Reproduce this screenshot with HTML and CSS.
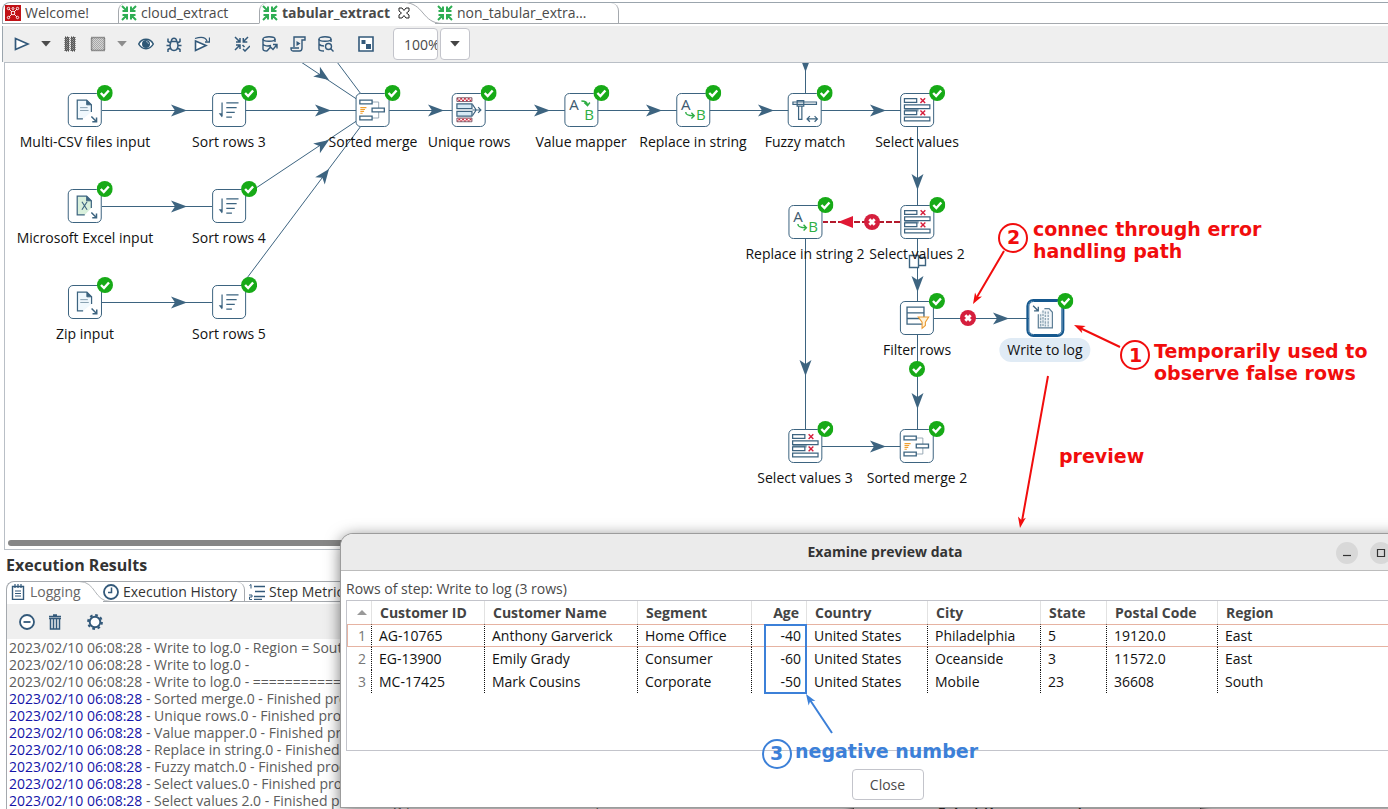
FILE: index.html
```html
<!DOCTYPE html>
<html lang="en">
<head>
<meta charset="utf-8">
<title>tabular_extract</title>
<link rel="stylesheet" href="styles.css">
</head>
<body>
<svg class="sprite" aria-hidden="true">
  <defs>
    <pattern id="hatch" width="4" height="4" patternUnits="userSpaceOnUse"><rect width="4" height="4" fill="#fff"/><rect width="2" height="2" fill="#d22c40"/><rect x="2" y="2" width="2" height="2" fill="#d22c40"/></pattern>
    <pattern id="dither" width="2" height="2" patternUnits="userSpaceOnUse"><rect width="1" height="1" fill="#555"/><rect x="1" y="1" width="1" height="1" fill="#555"/></pattern>
  </defs>
  <symbol id="transform" viewBox="0 0 16 16"><g fill="none" stroke="#2fae54" stroke-width="2"><path d="M1 1l5 5M6 1.500V6H1.500M15 1l-5 5M10 1.500V6h4.500M1 15l5-5M6 14.500V10H1.500M15 15l-5-5M10 14.500V10h4.500"/></g></symbol>
  <symbol id="check" viewBox="0 0 16 16"><circle cx="8" cy="8" r="8" fill="#17aa17"/><path d="M4 8l3 3 5-5.500" fill="none" stroke="#fff" stroke-width="2.400"/></symbol>
  <symbol id="cross" viewBox="0 0 16 16"><circle cx="8" cy="8" r="8" fill="#d51f3d"/><path d="M5.300 5.300l5.400 5.400M10.700 5.300l-5.400 5.400" fill="none" stroke="#fff" stroke-width="2.800"/></symbol>
  <symbol id="i-doc" viewBox="0 0 34 34"><path d="M15 26.500H9v-20h10l5 5V19" fill="#f0f8fd" stroke="#3d6480" stroke-width="1.300"/><path d="M19 6.500v5h5" fill="#3d6480" stroke="#3d6480"/><path d="M12 14.500h8M12 17.500h9" stroke="#7f99ab" stroke-width="1"/><path d="M24 24l5 5M29.500 25v4.500H25" fill="none" stroke="#3d6480" stroke-width="1.600"/></symbol>
  <symbol id="i-xls" viewBox="0 0 34 34"><path d="M17 26.500H9v-20h10l5 5V19" fill="#d9f0dc" stroke="#3d6480" stroke-width="1.300"/><path d="M19 6.500v5h5" fill="#3d6480" stroke="#3d6480"/><path d="M14 12.500l5.500 8.500M19.500 12.500L14 21" stroke="#3d6480" stroke-width="1.200"/><path d="M24 24l5 5M29.500 25v4.500H25" fill="none" stroke="#3d6480" stroke-width="1.600"/></symbol>
  <symbol id="i-sort" viewBox="0 0 34 34"><path d="M9.500 9v15M14 9.500h13M14 14.500h11M14 19.500h9M14 24.500h6" fill="none" stroke="#3d6480" stroke-width="1.300"/><path d="M6 20.500h3.500V25z" fill="#3d6480"/></symbol>
  <symbol id="i-merge" viewBox="0 0 34 34"><path d="M16 8.500h7.500v17H16" fill="none" stroke="#93a4b1"/><g fill="#fff" stroke="#3d6480" stroke-width="1.400"><path d="M3.500 6.500h13v4h-13zM3.500 23.500h13v4h-13zM16.500 15h13v4h-13z"/></g><path d="M4 14.500h6.500M4 16.500h5M4 18.500h4M4 20.500h2.500" stroke="#f0a030" stroke-width="1.200"/></symbol>
  <symbol id="i-unique" viewBox="0 0 34 34"><path d="M4.500 4h16v4h-16zM4.500 25.500h16v4h-16z" fill="url(#hatch)" stroke="#7d6170"/><path d="M4.500 10.500h16v5h-16zM4.500 18.500h16v5h-16z" fill="#d6e9f4" stroke="#3d6480" stroke-width="1.300"/><path d="M21 11l4 6-4 6M21 17h9M27 14l3 3-3 3" fill="none" stroke="#3d6480" stroke-width="1.200"/></symbol>
  <symbol id="i-map" viewBox="0 0 34 34"><text x="4" y="17" class="glyph glyph-a">A</text><text x="20" y="28" class="glyph glyph-b">B</text><path d="M17 7.500c4 0 6 1 6.500 4M20 9l3.500 3.500L26 9" fill="none" stroke="#2fae44" stroke-width="1.500"/></symbol>
  <symbol id="i-replace" viewBox="0 0 34 34"><text x="4" y="17" class="glyph glyph-a">A</text><text x="20" y="28" class="glyph glyph-b">B</text><path d="M9 19c0 3 2 4 8.500 4M15 20l3 3-3 3" fill="none" stroke="#2fae44" stroke-width="1.500"/></symbol>
  <symbol id="i-fuzzy" viewBox="0 0 34 34"><g fill="#fff" stroke="#3d6480" stroke-width="1.300"><path d="M4.500 8.500h25V11h-25zM10.500 13h3.500v14h-3.500zM9 7h7v6H9z"/></g><path d="M20 26.500h10M22.500 23.500l-3 3 3 3M27.500 23.500l3 3-3 3" fill="none" stroke="#3d6480" stroke-width="1.300"/></symbol>
  <symbol id="i-select" viewBox="0 0 34 34"><path d="M3.500 15.500h15v3h-15z" fill="#8fa5b5"/><g fill="#fff" stroke="#3d6480" stroke-width="1.300"><path d="M3.500 5h13v4h-13zM3.500 11.500h27v4h-27zM3.500 18h13v4h-13zM3.500 24.500h27v4h-27z"/></g><path d="M20.500 4.500l5 5M25.500 4.500l-5 5M20.500 17.500l5 5M25.500 17.500l-5 5" stroke="#d51f3d" stroke-width="1.500"/></symbol>
  <symbol id="i-filter" viewBox="0 0 34 34"><path d="M6.500 5.500h18v18h-18zM6.500 11.500h18M6.500 17.500h18" fill="#fff" stroke="#3d6480" stroke-width="1.400"/><path d="M18.500 16h11L26 21.500V25l-3.500 3v-6.500z" fill="#fff3d9" stroke="#eb9c35" stroke-width="1.200"/></symbol>
  <symbol id="i-log" viewBox="0 0 34 34"><path d="M4 4l5 5M9.500 5v4.500H5" fill="none" stroke="#3d6480" stroke-width="1.400"/><path d="M9.500 13v14.500h15V11l-3.500-4h-5" fill="#f2f6f9" stroke="#5e7f96" stroke-width="1.300"/><path d="M12 13v13M14.500 9v17M17 10v16M20 10v16" stroke="#8fa7b7" stroke-width="1.500" stroke-dasharray="2.500 1"/></symbol>
</svg>

<main class="app">
  <nav class="tabs" aria-label="Open files">
    <button class="tab tab-welcome"><svg class="i16" viewBox="0 0 16 16"><path fill="#c11116" d="M0 0h16v16H0z"/><g fill="none" stroke="#fff" stroke-width=".9"><path d="M4 4l3 3M12 4L9 7M4 12l3-3M12 12L9 9"/><circle cx="8" cy="8" r="1.800"/><circle cx="3.500" cy="3.500" r="1.200"/><circle cx="12.500" cy="3.500" r="1.200"/><circle cx="3.500" cy="12.500" r="1.200"/><circle cx="12.500" cy="12.500" r="1.200"/><circle cx="8" cy="3.500" r="1"/></g></svg>Welcome!</button>
    <button class="tab tab-cloud"><svg class="i16"><use href="#transform"/></svg>cloud_extract</button>
    <button class="tab tab-active"><svg class="i16"><use href="#transform"/></svg>tabular_extract<svg class="close-x" viewBox="0 0 12 12"><path d="M1 1h3l2 2.500L8 1h3v3L8.500 6 11 8v3H8L6 8.500 4 11H1V8l2.500-2L1 4z" fill="#fff" stroke="#222"/></svg></button>
    <svg class="swoop" viewBox="0 0 40 22"><path d="M0 0c22 0 18 21.500 40 21.500V22H0z" fill="#fff"/><path d="M0 .5c22 0 18 21 40 21" fill="none" stroke="#a5a9ae"/></svg>
    <button class="tab tab-last"><svg class="i16"><use href="#transform"/></svg>non_tabular_extra…</button>
    <span class="tab-rest"></span>
  </nav>

  <div class="toolbar">
    <button class="tool" aria-label="Run"><svg class="i16" viewBox="0 0 16 16"><path d="M1.500 2.500v11L14 8z" fill="#fff" stroke="#33597a" stroke-width="1.700"/></svg></button>
    <button class="tool caret" aria-label="Run options"><svg class="i8" viewBox="0 0 8 5"><path d="M0 0h8L4 4.500z" fill="#4c4c4c"/></svg></button>
    <button class="tool" aria-label="Pause"><svg class="i16" viewBox="0 0 16 16"><path d="M3 1h4v14H3zM9 1h4v14H9z" fill="#8d8d8d"/><path d="M3 1h4v14H3zM9 1h4v14H9z" fill="url(#dither)" stroke="#444" stroke-dasharray="1 1"/></svg></button>
    <button class="tool" aria-label="Stop"><svg class="i16" viewBox="0 0 16 16"><path d="M1.500 1.500h13v13h-13z" fill="#d4d4d4"/><path d="M1.500 1.500h13v13h-13z" fill="url(#dither)" fill-opacity=".35" stroke="#444" stroke-width="1.500" stroke-dasharray="1 1"/></svg></button>
    <button class="tool caret" aria-label="Stop options"><svg class="i8" viewBox="0 0 8 5"><path d="M0 0h8L4 4.500z" fill="#8d8d8d"/></svg></button>
    <button class="tool" aria-label="Preview"><svg class="i16" viewBox="0 0 16 16"><path d="M.7 8C4 1.800 12 1.800 15.300 8 12 14.200 4 14.200.7 8z" fill="#fff" stroke="#2f5876" stroke-width="1.500"/><circle cx="8" cy="8" r="4" fill="#2f5876"/><path d="M8 5.500A2.500 2.500 0 0 1 10.500 8" stroke="#9bb0c0" fill="none"/></svg></button>
    <button class="tool" aria-label="Debug"><svg class="i16" viewBox="0 0 16 16"><g fill="none" stroke="#33597a" stroke-width="1.500"><path d="M5 5.500h6l1 3.500c0 3-1.500 5.500-4 5.500S4 12 4 9zM5.500 5.500C5 1 11 1 10.500 5.500M4.500 7L2 5.500V2.500M11.500 7L14 5.500V2.500M4 9.500H.5M12 9.500h3.500M4.500 12L2 13.500V16M11.500 12l2.500 1.500V16"/></g></svg></button>
    <button class="tool" aria-label="Replay"><svg class="i16" viewBox="0 0 16 16"><path d="M1.500 5v9.500L12 9.500z" fill="#fff" stroke="#33597a" stroke-width="1.600"/><path d="M1 2.500c6-2 10.500-1.500 12 2.500M15.500 1.500v4.500H11" fill="none" stroke="#33597a" stroke-width="1.300"/></svg></button>
    <span class="gap"></span>
    <button class="tool" aria-label="Verify"><svg class="i16" viewBox="0 0 16 16"><g fill="none" stroke="#33597a" stroke-width="1.500"><path d="M1 1l5 5M6 2v4H2M14 1L9.500 5.500M9.300 2v4h4M1 14l5-5M6 13V9H2"/><path d="M8.500 9l2 2M9 13l2 2 5-5" /></g></svg></button>
    <button class="tool" aria-label="Analyze impact"><svg class="i16" viewBox="0 0 16 16"><g fill="none" stroke="#33597a" stroke-width="1.400"><ellipse cx="7" cy="3" rx="6" ry="2.200"/><path d="M1 3v10c0 1.200 2 2 4 2M13 3v3M1 8c1 2 5 2.500 8 1.500M5 15l3.500-4 2.500 2.500 4-5M11 8.500h4v4"/></g></svg></button>
    <button class="tool" aria-label="Get SQL"><svg class="i16" viewBox="0 0 16 16"><g fill="none" stroke="#33597a" stroke-width="1.400"><path d="M4 11V1h11v3h-3v8c0 2-1 3-2.500 3H3c-1.500 0-2-1-2-3h8"/></g><path d="M6.500 5v5l4-2.500z" fill="#33597a"/></svg></button>
    <button class="tool" aria-label="Explore database"><svg class="i16" viewBox="0 0 16 16"><g fill="none" stroke="#33597a" stroke-width="1.400"><ellipse cx="7" cy="3" rx="6" ry="2.200"/><path d="M1 3v10c0 1.200 2 2 5 2M13 3v3M1 8c1 1.500 3 2 5 2"/><circle cx="10.500" cy="10.500" r="3"/><path d="M12.500 12.500l3 3"/></g></svg></button>
    <span class="gap"></span>
    <button class="tool" aria-label="Show results"><svg class="i16" viewBox="0 0 16 16"><path d="M1 1h14v14H1z" fill="#fff" stroke="#33597a" stroke-width="1.600"/><path d="M3.500 4h4v4h-4zM8 8h5v5H8z" fill="#33597a"/></svg></button>
    <input class="zoom" type="text" value="100%" aria-label="Zoom">
    <button class="zoom-drop" aria-label="Zoom levels"><svg class="i8" viewBox="0 0 8 5"><path d="M0 0h8L4 4.500z" fill="#444"/></svg></button>
  </div>

  <section class="canvas" aria-label="Transformation">
    <svg class="hops" aria-hidden="true">
      <g class="hop">
        <path d="M97 47.500h830M97 143.500h110M97 239.500h110M224 143L368 47M224 239L368 47M224-49L368 47M224-145L368 47"/>
        <path d="M800.500-5v50M912.500 64v320M800.500 175v210M817 383.500h80M929 255.500h96"/>
      </g>
      <g class="heads">
        <path id="h" d="M166 41.500L182 47.500 166 53.500 170 47.500z"/>
        <use href="#h" x="144"/><use href="#h" x="257"/><use href="#h" x="363"/><use href="#h" x="475"/><use href="#h" x="587"/><use href="#h" x="699"/>
        <use href="#h" y="96"/><use href="#h" y="192"/><use href="#h" x="699" y="336"/><use href="#h" x="822" y="208"/>
        <path id="v" d="M906.500 111L912.500 127 918.500 111 912.500 115z"/>
        <use href="#v" y="102"/><use href="#v" y="219"/><use href="#v" x="-112" y="186"/><use href="#v" x="-112" y="-118"/>
        <path d="M-15-6L0 0-15 6-11 0z" transform="translate(324 77) rotate(-34)"/>
        <path d="M-15-6L0 0-15 6-11 0z" transform="translate(324 106) rotate(-53)"/>
        <path d="M-15-6L0 0-15 6-11 0z" transform="translate(324 17) rotate(34)"/>
      </g>
      <path d="M895 159H818" stroke="#b31a2c" stroke-width="2" stroke-dasharray="6 2"/>
      <path d="M833 159l15-6v12z" fill="#e01834"/>
      <path d="M904.500 192.500h9v12h-9zM913.500 194.500h7v8h-7z" fill="#fff" stroke="#3d6480" stroke-width="1.400"/>
      <use href="#cross" x="859" y="151" width="16" height="16"/>
      <use href="#cross" x="955" y="247" width="16" height="16"/>
      <use href="#check" x="904" y="298" width="16" height="16"/>
    </svg>
    <div class="node" style="left:80px;top:47px"><svg class="box"><use href="#i-doc"/></svg><svg class="ok"><use href="#check"/></svg><span class="name">Multi-CSV files input</span></div>
    <div class="node" style="left:224px;top:47px"><svg class="box"><use href="#i-sort"/></svg><svg class="ok"><use href="#check"/></svg><span class="name">Sort rows 3</span></div>
    <div class="node" style="left:368px;top:47px"><svg class="box"><use href="#i-merge"/></svg><svg class="ok"><use href="#check"/></svg><span class="name">Sorted merge</span></div>
    <div class="node" style="left:464px;top:47px"><svg class="box"><use href="#i-unique"/></svg><svg class="ok"><use href="#check"/></svg><span class="name">Unique rows</span></div>
    <div class="node" style="left:576px;top:47px"><svg class="box"><use href="#i-map"/></svg><svg class="ok"><use href="#check"/></svg><span class="name">Value mapper</span></div>
    <div class="node" style="left:688px;top:47px"><svg class="box"><use href="#i-replace"/></svg><svg class="ok"><use href="#check"/></svg><span class="name">Replace in string</span></div>
    <div class="node" style="left:800px;top:47px"><svg class="box"><use href="#i-fuzzy"/></svg><svg class="ok"><use href="#check"/></svg><span class="name">Fuzzy match</span></div>
    <div class="node" style="left:912px;top:47px"><svg class="box"><use href="#i-select"/></svg><svg class="ok"><use href="#check"/></svg><span class="name">Select values</span></div>
    <div class="node" style="left:80px;top:143px"><svg class="box"><use href="#i-xls"/></svg><svg class="ok"><use href="#check"/></svg><span class="name">Microsoft Excel input</span></div>
    <div class="node" style="left:224px;top:143px"><svg class="box"><use href="#i-sort"/></svg><svg class="ok"><use href="#check"/></svg><span class="name">Sort rows 4</span></div>
    <div class="node" style="left:80px;top:239px"><svg class="box"><use href="#i-doc"/></svg><svg class="ok"><use href="#check"/></svg><span class="name">Zip input</span></div>
    <div class="node" style="left:224px;top:239px"><svg class="box"><use href="#i-sort"/></svg><svg class="ok"><use href="#check"/></svg><span class="name">Sort rows 5</span></div>
    <div class="node" style="left:800px;top:159px"><svg class="box"><use href="#i-replace"/></svg><svg class="ok"><use href="#check"/></svg><span class="name">Replace in string 2</span></div>
    <div class="node" style="left:912px;top:159px"><svg class="box"><use href="#i-select"/></svg><svg class="ok"><use href="#check"/></svg><span class="name">Select values 2</span></div>
    <div class="node" style="left:912px;top:255px"><svg class="box"><use href="#i-filter"/></svg><svg class="ok"><use href="#check"/></svg><span class="name">Filter rows</span></div>
    <div class="node selected" style="left:1040px;top:255px"><svg class="box"><use href="#i-log"/></svg><svg class="ok"><use href="#check"/></svg><span class="name">Write to log</span></div>
    <div class="node" style="left:800px;top:383px"><svg class="box"><use href="#i-select"/></svg><svg class="ok"><use href="#check"/></svg><span class="name">Select values 3</span></div>
    <div class="node" style="left:912px;top:383px"><svg class="box"><use href="#i-merge"/></svg><svg class="ok"><use href="#check"/></svg><span class="name">Sorted merge 2</span></div>
    <div class="scroll"></div>
  </section>

  <section class="results">
    <h2 class="heading">Execution Results</h2>
    <nav class="rtabs" aria-label="Results">
      <button class="rtab rtab-active"><svg class="i16" viewBox="0 0 16 16"><path d="M2.500 2.500h11v13h-11z" fill="#fff" stroke="#33597a" stroke-width="1.400"/><path d="M5 0v4M8 0v4M11 0v4M5 7h6M5 9.500h6M5 12h6" stroke="#33597a" stroke-width="1.200"/></svg>Logging</button>
      <svg class="swoop rswoop" viewBox="0 0 40 22" preserveAspectRatio="none"><path d="M0 .5c22 0 18 21 40 21" fill="none" stroke="#a5a9ae"/></svg>
      <button class="rtab rtab-history"><svg class="i16" viewBox="0 0 16 16"><circle cx="8" cy="8" r="7" fill="#fff" stroke="#33597a" stroke-width="1.800"/><path d="M8.500 3.500v5H5" fill="none" stroke="#33597a" stroke-width="1.500"/></svg>Execution History</button>
      <button class="rtab rtab-metrics"><svg class="i16" viewBox="0 0 16 16"><path d="M5 2.500h11M6 7.500h10M5 12.500h11M5 15.500h8" stroke="#33597a" stroke-width="1.300"/><path d="M.5 1.500L2 .5v4M0 11h3v2H.5v2.500H3" fill="none" stroke="#33597a"/></svg>Step Metrics</button>
    </nav>
    <div class="rbody">
      <div class="rtools">
        <button class="tool" aria-label="Collapse"><svg class="i16" viewBox="0 0 16 16"><circle cx="8" cy="8" r="7" fill="#fff" stroke="#33597a" stroke-width="1.800"/><path d="M4.500 8h7" stroke="#33597a" stroke-width="1.800"/></svg></button>
        <button class="tool" aria-label="Clear log"><svg class="i16" viewBox="0 0 16 16"><path d="M2 2.500h12M6 1h4M2 4.500h12M3.500 5v10h9V5M6.500 5v10M9.500 5v10" fill="none" stroke="#33597a" stroke-width="1.500"/></svg></button>
        <span class="gap"></span>
        <button class="tool" aria-label="Log settings"><svg class="i16" viewBox="0 0 16 16"><circle cx="8" cy="8" r="5.300" fill="#fff" stroke="#33597a" stroke-width="1.900"/><circle cx="8" cy="8" r="6.900" fill="none" stroke="#33597a" stroke-width="2" stroke-dasharray="2.700 2.720"/></svg></button>
      </div>
      <div class="log">
        <p>2023/02/10 06:08:28 - Write to log.0 - Region = South</p>
        <p>2023/02/10 06:08:28 - Write to log.0 - </p>
        <p>2023/02/10 06:08:28 - Write to log.0 - ====================</p>
        <p><time>2023/02/10 06:08:28</time> - Sorted merge.0 - Finished processing</p>
        <p><time>2023/02/10 06:08:28</time> - Unique rows.0 - Finished processing</p>
        <p><time>2023/02/10 06:08:28</time> - Value mapper.0 - Finished processing</p>
        <p><time>2023/02/10 06:08:28</time> - Replace in string.0 - Finished processing</p>
        <p><time>2023/02/10 06:08:28</time> - Fuzzy match.0 - Finished processing</p>
        <p><time>2023/02/10 06:08:28</time> - Select values.0 - Finished processing</p>
        <p><time>2023/02/10 06:08:28</time> - Select values 2.0 - Finished processing (I=0, O=0, R=9, W=9, U=0, E=0)</p>
      </div>
    </div>
  </section>

  <div class="back-window"><b>Select the preview step:</b></div>

  <section class="dialog" role="dialog" aria-labelledby="dlg-title">
    <header class="dlg-head">
      <h2 id="dlg-title">Examine preview data</h2>
      <div class="win-buttons">
        <button class="win" aria-label="Minimize"><svg class="i16" viewBox="0 0 16 16"><path d="M4 10.500h8" stroke="#333" stroke-width="1.200"/></svg></button>
        <button class="win" aria-label="Maximize"><svg class="i16" viewBox="0 0 16 16"><path d="M4.500 4.500h7v7h-7z" fill="none" stroke="#333" stroke-width="1.200"/></svg></button>
      </div>
    </header>
    <div class="dlg-body">
      <p class="caption">Rows of step: Write to log (3 rows)</p>
      <div class="grid">
        <table>
          <colgroup><col class="c-n"><col class="c-id"><col class="c-name"><col class="c-seg"><col class="c-age"><col class="c-country"><col class="c-city"><col class="c-state"><col class="c-zip"><col></colgroup>
          <thead><tr><th class="num"><svg class="sort" viewBox="0 0 10 5"><path d="M0 5l5-5 5 5z" fill="#999"/></svg></th><th>Customer ID</th><th>Customer Name</th><th>Segment</th><th class="num">Age</th><th>Country</th><th>City</th><th>State</th><th>Postal Code</th><th>Region</th></tr></thead>
          <tbody>
            <tr class="current"><td class="num idx">1</td><td>AG-10765</td><td>Anthony Garverick</td><td>Home Office</td><td class="num">-40</td><td>United States</td><td>Philadelphia</td><td>5</td><td>19120.0</td><td>East</td></tr>
            <tr><td class="num idx">2</td><td>EG-13900</td><td>Emily Grady</td><td>Consumer</td><td class="num">-60</td><td>United States</td><td>Oceanside</td><td>3</td><td>11572.0</td><td>East</td></tr>
            <tr><td class="num idx">3</td><td>MC-17425</td><td>Mark Cousins</td><td>Corporate</td><td class="num">-50</td><td>United States</td><td>Mobile</td><td>23</td><td>36608</td><td>South</td></tr>
          </tbody>
        </table>
      </div>
      <div class="actions"><button class="close">Close</button></div>
    </div>
  </section>

  <svg class="notes">
    <g class="red">
      <path d="M1004 251L977 297M1120 347L1080 328M1048 376L1022 521"/>
      <path class="tip" d="M0 0L-11-4-8 0-11 4z" transform="translate(973 304) rotate(120)"/>
      <path class="tip" d="M0 0L-11-4-8 0-11 4z" transform="translate(1074 325) rotate(205)"/>
      <path class="tip" d="M0 0L-11-4-8 0-11 4z" transform="translate(1020 528) rotate(100)"/>
      <circle cx="1013" cy="238" r="14"/><circle cx="1135" cy="355" r="14"/>
      <text x="1007" y="244">2</text><text x="1129" y="362">1</text>
      <text x="1033" y="236">connec through error</text>
      <text x="1033" y="258">handling path</text>
      <text x="1154" y="358">Temporarily used to</text>
      <text x="1154" y="380">observe false rows</text>
      <text x="1059" y="463">preview</text>
    </g>
    <g class="blue">
      <path d="M765 625h41v68h-41zM832 733L810 700"/>
      <path class="tip" d="M0 0L-11-4-8 0-11 4z" transform="translate(806 694) rotate(237)"/>
      <circle cx="777" cy="754" r="14"/>
      <text x="770" y="760">3</text>
      <text x="795" y="758">negative number</text>
    </g>
  </svg>
</main>
</body>
</html>
```
FILE: styles.css
```css
* { box-sizing: border-box; }
body { margin: 0; font: 14px/20px "Open Sans", "Noto Sans", sans-serif; color: #4a4a4a; background: #fff; }
button, input { font: inherit; color: inherit; }
button { background: none; border: 0; padding: 0; margin: 0; }
p, h2 { margin: 0; }
svg { display: block; flex: none; }
.sprite { position: absolute; width: 0; height: 0; }
.i16 { width: 16px; height: 16px; }
.i8 { width: 10px; height: 6px; }

.app { position: relative; display: flex; flex-direction: column; height: 100vh; overflow: hidden; padding-left: 2px; padding-top: 2px; }

.tabs { display: flex; height: 22px; border-top: 1px solid #9ba5ad; border-left: 1px solid #9ba5ad; border-top-left-radius: 8px; }
.tab { display: flex; align-items: center; gap: 4px; padding-left: 2px; border-bottom: 1px solid #a5a9ae; white-space: nowrap; }
.tab-welcome { width: 115px; }
.tab-cloud { width: 141px; border-left: 1px solid #a5a9ae; border-top-left-radius: 8px; }
.tab-active { position: relative; z-index: 1; width: 144px; border-bottom-color: #fff; border-left: 1px solid #a5a9ae; border-top-left-radius: 8px; font-weight: 700; }
.close-x { width: 12px; height: 12px; margin-left: 4px; }
.swoop { width: 40px; height: 22px; margin-top: -1px; margin-right: -8px; }
.tab-last { width: 184px; border-right: 1px solid #a5a9ae; border-top-right-radius: 8px; }
.tab-rest { flex: 1; border-bottom: 1px solid #a5a9ae; }

.toolbar { display: flex; align-items: center; height: 36px; margin-top: 2px; padding-left: 5px; background: #efefef; border-left: 1px solid #9ba5ad; }
.tool { display: flex; align-items: center; justify-content: center; width: 28px; height: 28px; }
.caret { width: 20px; }
.gap { width: 12px; }
.zoom { width: 45px; height: 32px; margin-left: 13px; padding: 0 0 0 10px; border: 1px solid #c3c4cb; border-radius: 4px; background: #fff; }
.zoom-drop { display: flex; align-items: center; justify-content: center; width: 30px; height: 32px; margin-left: 2px; border: 1px solid #c3c4cb; border-radius: 4px; background: #fff; }

.canvas { position: relative; flex: 1; min-height: 0; margin-left: 2px; overflow: hidden; border: 1px solid #b9bfc6; border-right: 0; background: #fff; }
.hops { position: absolute; inset: 0; width: 100%; height: 100%; }
.hop { fill: none; stroke: #3d6480; stroke-width: 1; }
.heads { fill: #3d6480; }
.node { position: absolute; display: flex; flex-direction: column; align-items: center; gap: 3px; margin-top: -17px; transform: translateX(-50%); color: #111; white-space: nowrap; }
.box { width: 34px; height: 34px; border: 1px solid #3d6480; border-radius: 5px; background: #fff; }
.ok { position: absolute; left: 50%; top: -8px; width: 16px; height: 16px; margin-left: 12px; }
.name { padding: 0 8px; line-height: 24px; }
.selected .box { outline: 2px solid #15588e; border-color: #15588e; }
.selected .name { background: #e0ebf5; border-radius: 12px; }
.glyph { font: 16px "Open Sans", sans-serif; }
.glyph-a { fill: #3d5a70; }
.glyph-b { fill: #2fae44; }
.scroll { position: absolute; left: 3px; right: 8px; bottom: 3px; height: 6px; border-radius: 3px; background: #868686; }

.results { flex: none; display: flex; flex-direction: column; height: 259px; padding-left: 4px; overflow: hidden; }
.heading { font-size: 16px; line-height: 31px; color: #333; }
.rtabs { display: flex; height: 21px; border-top: 1px solid #a5a9ae; border-left: 1px solid #a5a9ae; border-top-left-radius: 8px; color: #333; }
.rtab { display: flex; align-items: center; gap: 4px; white-space: nowrap; }
.rtab-active { width: 72px; padding-left: 3px; color: #666; }
.rswoop { width: 32px; height: 21px; margin-right: -8px; }
.rtab-history { width: 142px; border-right: 1px solid #a5a9ae; border-bottom: 1px solid #a5a9ae; border-top-right-radius: 8px; }
.rtab-metrics { flex: 1; padding-left: 4px; border-bottom: 1px solid #a5a9ae; }
.rbody { border-left: 1px solid #a5a9ae; }
.rtools { display: flex; align-items: center; height: 35px; margin-top: 2px; padding-left: 6px; background: #efefef; }
.log { padding-left: 2px; color: #5c5c5c; line-height: 17px; white-space: nowrap; }
.log time { color: #1414a8; }

.back-window { position: absolute; left: 853px; bottom: -20px; width: 348px; height: 60px; padding: 32px 0 0 84px; line-height: 20px; background: #ececec; border: 1px solid #555; color: #333; box-shadow: 0 0 10px #000; }

.dialog { position: absolute; left: 341px; right: -41px; bottom: 2px; background: #fff; border-radius: 12px 12px 0 0; box-shadow: 0 0 0 1px #9c9c9c, 0 3px 16px #0009; }
.dlg-head { display: flex; justify-content: center; align-items: center; height: 37px; border-bottom: 1px solid #bcbcbc; border-radius: 12px 12px 0 0; background: #ebebeb; }
.dlg-head h2 { font-size: 14px; color: #333; }
.win-buttons { position: absolute; right: 37px; top: 8px; display: flex; gap: 12px; }
.win { display: flex; align-items: center; justify-content: center; width: 22px; height: 22px; border-radius: 11px; background: #d8d8d8; }
.dlg-body { padding: 7px 0 7px 5px; }
.caption { line-height: 22px; }
.grid { height: 151px; border: 1px solid #c3c4cb; }
table { width: 100%; border-collapse: separate; border-spacing: 0; table-layout: fixed; }
th, td { height: 23px; padding: 0 8px 0 7px; text-align: left; line-height: 21px; white-space: nowrap; }
th { padding: 0 8px; border-left: 1px solid #e2e2e2; font-weight: 700; color: #444; }
td { border-left: 1px dotted #111; color: #111; }
th:first-child, td:first-child { border-left: 0; }
.current td { border-top: 1px solid #e6b3a2; border-bottom: 1px solid #e6b3a2; }
.current td:first-child { border-left: 1px solid #e6b3a2; }
th.num, td.num { padding: 0 5px; text-align: right; }
th.num { padding-right: 7px; }
td.idx { color: #777; }
.sort { width: 10px; height: 5px; margin-left: 5px; }
.c-n { width: 24px; } .c-id { width: 113px; } .c-name { width: 153px; } .c-seg { width: 114px; } .c-age { width: 55px; }
.c-country { width: 121px; } .c-city { width: 113px; } .c-state { width: 66px; } .c-zip { width: 111px; }
.actions { display: flex; justify-content: center; padding-top: 18px; }
.close { width: 72px; height: 31px; border: 1px solid #c3c4cb; border-radius: 4px; background: #fff; }

.notes { position: absolute; left: 0; top: 0; width: 100%; height: 100%; pointer-events: none; font: 700 19px "DejaVu Sans", sans-serif; }
.notes path, .notes circle { fill: none; stroke-width: 2; }
.red path, .red circle { stroke: #f10d0d; }
.notes .red text, .notes .red .tip { fill: #f10d0d; stroke: none; }
.blue path, .blue circle { stroke: #3c80d8; }
.notes .blue text, .notes .blue .tip { fill: #3c80d8; stroke: none; }
```
